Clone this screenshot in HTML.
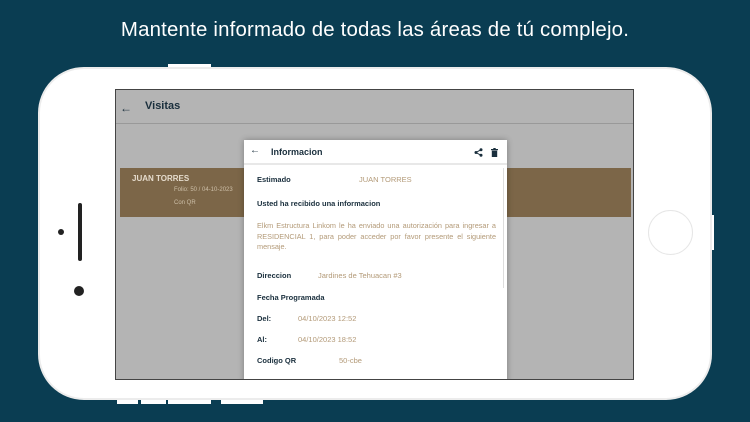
<!DOCTYPE html>
<html><head><meta charset="utf-8"><style>
*{margin:0;padding:0;box-sizing:border-box}
body{width:750px;height:422px;background:#0a3d52;position:relative;overflow:hidden;font-family:"Liberation Sans",sans-serif}
.title{position:absolute;top:19px;left:0;width:750px;text-align:center;color:#fff;font-size:20.4px;letter-spacing:0.2px}
.phone{position:absolute;left:38px;top:67px;width:674px;height:333px;background:#fff;border-radius:46px;border:2px solid #ececec}
.tab{position:absolute;background:#fff}
.screen{position:absolute;left:115px;top:89px;width:519px;height:291px;background:#b4b4b4;border:1px solid #444;overflow:hidden}
.hdr{position:absolute;left:0;top:0;width:100%;height:34px;border-bottom:1px solid #999}
.hdr span{position:absolute;top:10px;font-size:11px;font-weight:bold;color:#1a2f3d}
.card{position:absolute;left:4px;top:78px;width:511px;height:49px;background:#7c6648}
.card b{position:absolute;left:12px;top:6px;font-size:8px;color:#e6dccd}
.card i{position:absolute;font-style:normal;font-size:6px;color:#cdbfa8}
.dlg{position:absolute;left:128px;top:50px;width:263px;height:245px;background:#fff;box-shadow:0 0 6px rgba(0,0,0,.3)}
.dh{height:25px;border-bottom:2px solid #e8e8e8;position:relative}
.dh span{position:absolute;top:7px;font-size:9px;font-weight:bold;color:#1a2f3d}
.t{position:absolute;font-size:7.5px;font-weight:bold;color:#1a2f3d}
.v{position:absolute;font-size:7.5px;color:#b39a78}
.p{position:absolute;left:13px;top:81px;width:239px;font-size:7.3px;line-height:10.5px;color:#b39a78;text-align:justify}
</style></head><body>
<div class="title">Mantente informado de todas las áreas de tú complejo.</div>
<div class="tab" style="left:168px;top:64px;width:43px;height:5px"></div>
<div class="tab" style="left:117px;top:398px;width:21px;height:6px"></div>
<div class="tab" style="left:141px;top:398px;width:25px;height:6px"></div>
<div class="tab" style="left:168px;top:398px;width:43px;height:6px"></div>
<div class="tab" style="left:221px;top:398px;width:42px;height:6px"></div>
<div class="tab" style="left:708px;top:215px;width:6px;height:35px"></div>
<div class="phone"></div>
<div style="position:absolute;left:78px;top:203px;width:4px;height:58px;background:#222;border-radius:2px"></div>
<div style="position:absolute;left:58px;top:229px;width:6px;height:6px;background:#222;border-radius:50%"></div>
<div style="position:absolute;left:74px;top:286px;width:10px;height:10px;background:#222;border-radius:50%"></div>
<div style="position:absolute;left:648px;top:210px;width:45px;height:45px;border:1.5px solid #e6e6e6;border-radius:50%"></div>
<div class="screen">
 <div class="hdr"><span style="left:4px;top:11px;font-weight:normal;font-size:12px">←</span><span style="left:29px">Visitas</span></div>
 <div class="card"><b>JUAN TORRES</b><i style="left:54px;top:19px">Folio: 50 / 04-10-2023</i><i style="left:54px;top:32px">Con QR</i></div>
 <div class="dlg">
  <div class="dh"><span style="left:6px;top:5px;font-weight:normal;font-size:10px">←</span><span style="left:27px">Informacion</span>
   <svg style="position:absolute;left:230px;top:8px" width="9" height="9" viewBox="0 0 9 9"><circle cx="7" cy="1.7" r="1.5" fill="#1a2f3d"/><circle cx="7" cy="7.3" r="1.5" fill="#1a2f3d"/><circle cx="2" cy="4.5" r="1.5" fill="#1a2f3d"/><path d="M7 1.7L2 4.5L7 7.3" stroke="#1a2f3d" fill="none"/></svg>
   <svg style="position:absolute;left:247px;top:8px" width="7" height="9" viewBox="0 0 7 9"><rect x="0" y="1" width="7" height="1.2" fill="#1a2f3d"/><rect x="2.3" y="0" width="2.4" height="1.5" fill="#1a2f3d"/><rect x="0.8" y="2.6" width="5.4" height="6.4" fill="#1a2f3d"/></svg>
  </div>
  <div style="position:absolute;right:3px;top:28px;width:1px;height:120px;background:#ddd"></div>
  <div class="t" style="left:13px;top:35px">Estimado</div><div class="v" style="left:115px;top:35px">JUAN TORRES</div>
  <div class="t" style="left:13px;top:59px">Usted ha recibido una informacion</div>
  <div class="p">Elkm Estructura Linkom le ha enviado una autorización para ingresar a RESIDENCIAL 1, para poder acceder por favor presente el siguiente mensaje.</div>
  <div class="t" style="left:13px;top:131px">Direccion</div><div class="v" style="left:74px;top:131px">Jardines de Tehuacan #3</div>
  <div class="t" style="left:13px;top:153px">Fecha Programada</div>
  <div class="t" style="left:13px;top:174px">Del:</div><div class="v" style="left:54px;top:174px">04/10/2023 12:52</div>
  <div class="t" style="left:13px;top:195px">Al:</div><div class="v" style="left:54px;top:195px">04/10/2023 18:52</div>
  <div class="t" style="left:13px;top:216px">Codigo QR</div><div class="v" style="left:95px;top:216px">50-cbe</div>
 </div>
</div>
</body></html>
